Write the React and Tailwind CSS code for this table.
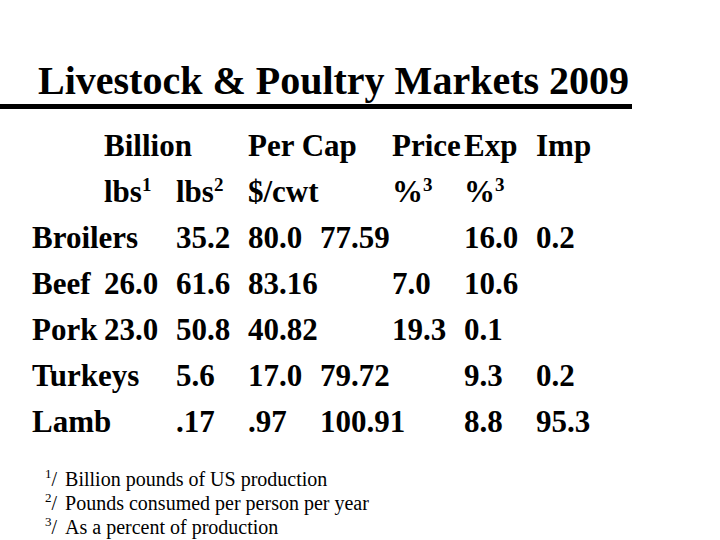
const colClass = ['', 'col-start-1', 'col-start-2', 'col-start-3', 'col-start-4', 'col-start-5', 'col-start-6', 'col-start-7', 'col-start-8'];

function Sup({ children }) {
  return <span className="align-super text-[19px] leading-none">{children}</span>;
}

const rows = [
  [[2, 'Billion'], [4, 'Per Cap'], [6, 'Price'], [7, 'Exp'], [8, 'Imp']],
  [[2, <>lbs<Sup>1</Sup></>], [3, <>lbs<Sup>2</Sup></>], [4, '$/cwt'], [6, <>%<Sup>3</Sup></>], [7, <>%<Sup>3</Sup></>]],
  [[1, 'Broilers'], [3, '35.2'], [4, '80.0'], [5, '77.59'], [7, '16.0'], [8, '0.2']],
  [[1, 'Beef'], [2, '26.0'], [3, '61.6'], [4, '83.16'], [6, '7.0'], [7, '10.6']],
  [[1, 'Pork'], [2, '23.0'], [3, '50.8'], [4, '40.82'], [6, '19.3'], [7, '0.1']],
  [[1, 'Turkeys'], [3, '5.6'], [4, '17.0'], [5, '79.72'], [7, '9.3'], [8, '0.2']],
  [[1, 'Lamb'], [3, '.17'], [4, '.97'], [5, '100.91'], [7, '8.8'], [8, '95.3']],
];

const notes = [
  ['1', 'Billion pounds of US production'],
  ['2', 'Pounds consumed per person per year'],
  ['3', 'As a percent of production'],
];

export default function App() {
  return (
    <div className="w-[720px] h-[540px] bg-white text-black overflow-hidden" style={{ fontFamily: '"Liberation Serif", "Times New Roman", serif' }}>
      {/* Title */}
      <div className="pt-[57px]">
        <h1 className="pl-[38px] text-[40px] font-bold leading-[48px] whitespace-nowrap">Livestock &amp; Poultry Markets 2009</h1>
        <div className="w-[632px] h-[5px] bg-black -mt-[1px]" />
      </div>

      {/* Table */}
      <div className="mt-[14px] pl-[32px] grid grid-cols-[repeat(8,72px)] text-[31px] font-bold leading-[46px]">
        {rows.map((row, r) =>
          row.map(([col, content], i) => (
            <div key={r + '-' + i} className={colClass[col] + ' whitespace-nowrap'} style={{ gridRow: r + 1 }}>
              {content}
            </div>
          ))
        )}
      </div>

      {/* Footnotes */}
      <div className="mt-[22px] pl-[45px] text-[20px] leading-[23.5px]">
        {notes.map(([n, text]) => (
          <div key={n} className="whitespace-nowrap">
            <span className="align-super text-[13px] leading-none">{n}</span>/<span className="pl-[8px]">{text}</span>
          </div>
        ))}
      </div>
    </div>
  );
}
